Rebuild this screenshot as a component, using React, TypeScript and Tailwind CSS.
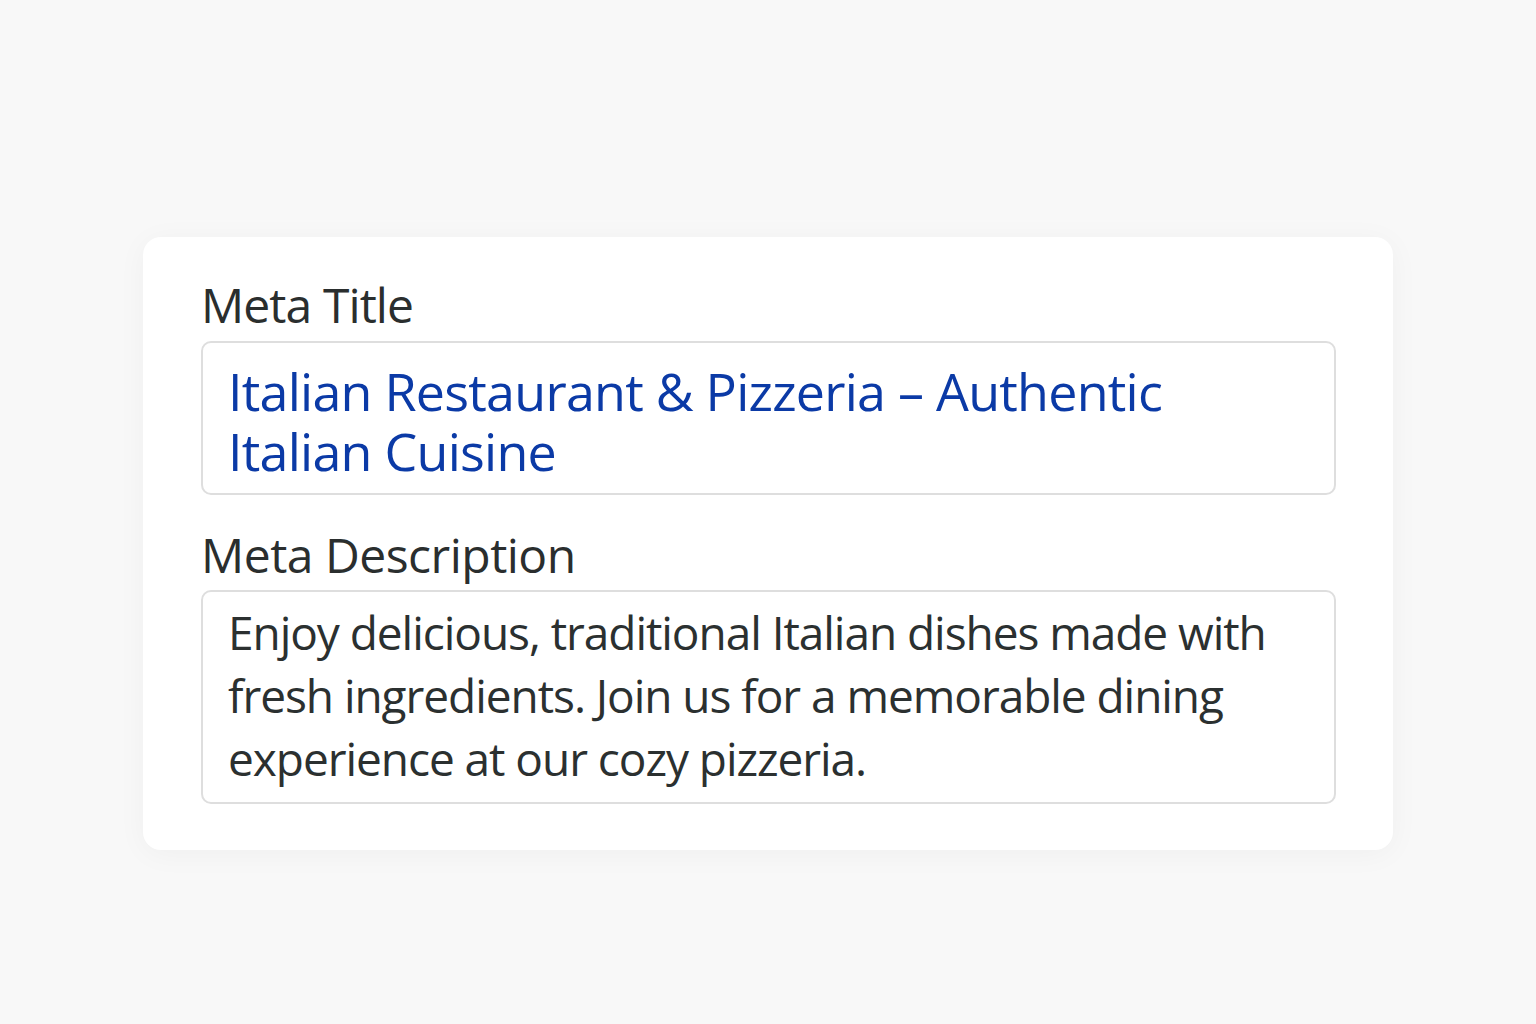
export default function App() {
  return (
    <div className="min-h-screen w-full bg-[#f8f8f8] flex justify-center pt-[237px]" style={{ fontFamily: '"Open Sans", sans-serif' }}>
      <div className="w-[1250px] h-[613px] bg-white rounded-[18px] shadow-[0_4px_30px_rgba(0,0,0,0.04)] px-[58px] pt-[38px]">
        <div className="text-[48px] leading-[60px] text-[#2a2e2e] tracking-[-0.9px]">Meta Title</div>
        <div className="mt-[6px] w-[1135px] h-[154px] border-2 border-[#dedede] rounded-[10px] px-[25px] pt-[18px]">
          <div className="text-[52px] leading-[60px] text-[#0b3aa6] tracking-[-0.75px] whitespace-nowrap">
            <div>Italian Restaurant &amp; Pizzeria – Authentic</div>
            <div>Italian Cuisine</div>
          </div>
        </div>
        <div className="mt-[30px] text-[48px] leading-[60px] text-[#2a2e2e] tracking-[-0.5px]">Meta Description</div>
        <div className="mt-[5px] w-[1135px] h-[214px] border-2 border-[#dedede] rounded-[10px] px-[25px] pt-[9px]">
          <div className="text-[46px] leading-[63px] text-[#2b3030] tracking-[-1.05px] whitespace-nowrap">
            <div>Enjoy delicious, traditional Italian dishes made with</div>
            <div>fresh ingredients. Join us for a memorable dining</div>
            <div>experience at our cozy pizzeria.</div>
          </div>
        </div>
      </div>
    </div>
  );
}
